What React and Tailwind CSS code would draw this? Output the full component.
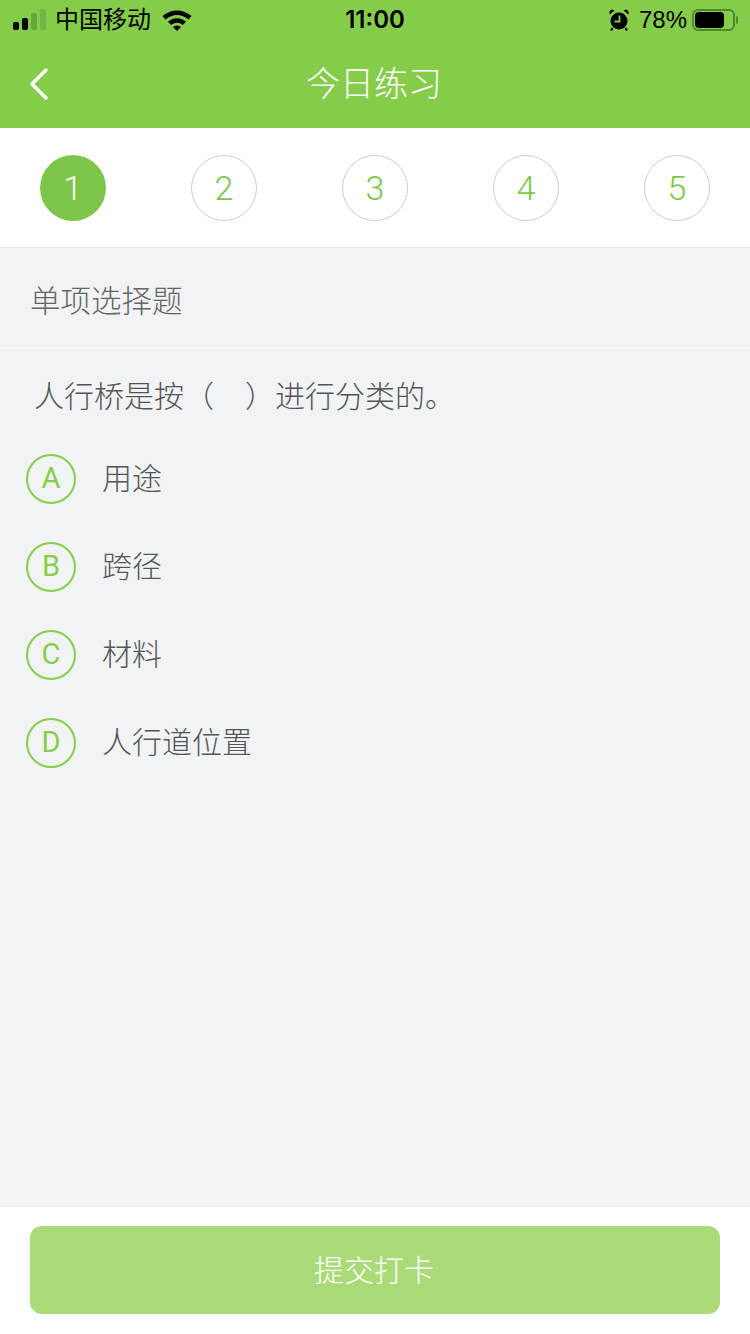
import React from 'react'

const FONT = { fontFamily: '"Liberation Sans", "Noto Sans CJK SC", sans-serif' }
const DIGIT_FONT = { fontFamily: 'Roboto, sans-serif' }

const STEPS = [1, 2, 3, 4, 5]
const OPTIONS = [
  { key: 'A', text: '用途' },
  { key: 'B', text: '跨径' },
  { key: 'C', text: '材料' },
  { key: 'D', text: '人行道位置' },
]

function StatusBar() {
  return (
    <div className="relative flex h-10 items-center justify-between pl-[13px] pr-[12px] text-black">
      <div className="flex items-center">
        {/* Signal bars */}
        <svg width="33" height="22" viewBox="0 0 33 22" className="mt-[-1px]">
          <rect x="0" y="13" width="6" height="8" rx="2" fill="#000" />
          <rect x="9" y="9" width="6" height="12" rx="2" fill="#000" />
          <rect x="18" y="4" width="6" height="17" rx="2" fill="#68a63d" />
          <rect x="27" y="0" width="6" height="21" rx="2" fill="#73b545" />
        </svg>
        <span className="ml-[9px] text-[24px] leading-none">中国移动</span>
        {/* Wifi */}
        <svg width="30" height="22" viewBox="0 0 30 22" className="ml-[11px]">
          <path d="M0.5 7 C9 -0.5 21 -0.5 29.5 7 L26.5 10.5 C19.5 4.5 10.5 4.5 3.5 10.5 Z" fill="#000" />
          <path d="M6 12.8 C11.5 8.2 18.5 8.2 24 12.8 L20.8 16 C17 13 13 13 9.2 16 Z" fill="#000" />
          <path d="M11 18 C13.5 16 16.5 16 19 18 L15 22 Z" fill="#000" />
        </svg>
      </div>
      <span className="absolute left-1/2 top-[6px] -translate-x-1/2 text-[24px] font-semibold leading-[28px]" style={{ fontFamily: 'Inter, sans-serif' }}>11:00</span>
      <div className="flex items-center">
        {/* Alarm clock */}
        <svg width="20" height="22" viewBox="0 0 20 22">
          <circle cx="10" cy="12" r="8.5" fill="#000" />
          <path d="M0.5 5.5 L5.5 1.5 L2.5 0.5 L0.5 2.5 Z M19.5 5.5 L14.5 1.5 L17.5 0.5 L19.5 2.5 Z" fill="#000" />
          <path d="M3.5 19 L2 21.5 M16.5 19 L18 21.5" stroke="#000" strokeWidth="2" />
          <path d="M10.5 6.5 V12.5 H5.5" stroke="#86cd4c" strokeWidth="1.8" fill="none" />
        </svg>
        <span className="ml-[10px] text-[24px] leading-none">78%</span>
        {/* Battery */}
        <div className="ml-[5px] flex items-center">
          <div className="flex h-[22px] w-[43px] items-center rounded-[6px] border-2 border-[#4f8a2b] p-[1px]">
            <div className="h-full w-[29px] rounded-[4px] bg-black" />
          </div>
          <div className="ml-[1px] h-[8px] w-[2px] rounded-r-sm bg-[#4f8a2b]" />
        </div>
      </div>
    </div>
  )
}

function Header() {
  return (
    <div className="bg-[#86cc4b]">
      <StatusBar />
      <div className="relative flex h-[88px] items-center justify-center pr-[2px]">
        <svg width="20" height="34" viewBox="0 0 20 34" className="absolute left-[29px] top-[27px]">
          <path d="M17 3 L3 17 L17 31" stroke="#fff" strokeWidth="3.5" fill="none" strokeLinecap="round" strokeLinejoin="round" />
        </svg>
        <span className="text-[34px] font-light leading-none text-white">今日练习</span>
      </div>
    </div>
  )
}

function Steps() {
  return (
    <div className="flex h-[120px] items-start justify-between border-b border-[#e8e8e8] bg-white px-10 pt-[27px]" style={DIGIT_FONT}>
      {STEPS.map((n) => (
        <div
          key={n}
          className={
            n === 1
              ? 'flex h-[66px] w-[66px] items-center justify-center rounded-full bg-[#7ec64a] text-[34px] font-light text-white'
              : 'flex h-[66px] w-[66px] items-center justify-center rounded-full border border-[#cccccc] text-[34px] font-light text-[#7ec64a]'
          }
        >
          {n}
        </div>
      ))}
    </div>
  )
}

export default function App() {
  return (
    <div className="flex h-[1334px] w-[750px] flex-col overflow-hidden bg-[#f2f3f5]" style={FONT}>
      <Header />
      <Steps />
      <div className="flex h-[98px] items-center border-b border-[#e9eaec] pl-[30px] pt-[10px] text-[30.5px] font-light text-[#666666]">
        单项选择题
      </div>
      <div className="flex-1">
        <div className="pl-[34px] pt-[31px] text-[30px] font-light leading-[40px] text-[#555555]">
          人行桥是按（<span className="inline-block w-[31px]" />）进行分类的。
        </div>
        <div className="mt-[37px] flex flex-col gap-[38px] pl-[26px]">
          {OPTIONS.map((o) => (
            <div key={o.key} className="flex h-[50px] items-center">
              <div className="flex h-[50px] w-[50px] items-center justify-center rounded-full border-2 border-[#86cd4c] text-[29px] text-[#86cd4c]" style={DIGIT_FONT}>
                {o.key}
              </div>
              <span className="ml-[26px] mt-[-2px] text-[30px] font-light text-[#555555]">{o.text}</span>
            </div>
          ))}
        </div>
      </div>
      <div className="h-[128px] border-t border-[#e8e8e8] bg-white px-[30px] pt-[19px]">
        <div className="flex h-[88px] items-center justify-center rounded-[12px] bg-[#abdb78] pr-[2px] text-[30px] font-light text-white">
          提交打卡
        </div>
      </div>
    </div>
  )
}
